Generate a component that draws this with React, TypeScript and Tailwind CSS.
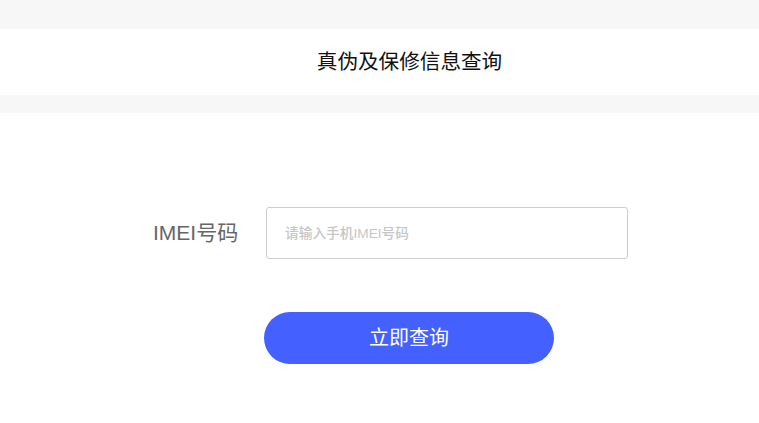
export default function App() {
  return (
    <div className="min-h-[423px] w-full bg-white" style={{ fontFamily: '"Liberation Sans", "Noto Sans CJK SC", sans-serif' }}>
      <div className="h-[29px] bg-[#f7f7f7]" />
      <div className="flex h-[66px] items-center justify-center pl-[60px] text-[20.6px] text-[#111]">
        真伪及保修信息查询
      </div>
      <div className="h-[18px] bg-[#f7f7f7]" />
      <div className="flex flex-col items-start pt-[94px] pl-[153px]">
        <div className="flex items-center">
          <div className="w-[113px] text-[21px] text-[#666]">IMEI号码</div>
          <input
            className="h-[52px] w-[362px] rounded-[3px] border border-[#cccccc] px-[18px] text-[13.7px] font-medium text-[#333] outline-none placeholder:text-[#c6c6c6]"
            placeholder="请输入手机IMEI号码"
          />
        </div>
        <button className="mt-[53px] ml-[111px] flex h-[52px] w-[290px] items-center justify-center rounded-full bg-[#4460ff] text-[20px] text-white">
          立即查询
        </button>
      </div>
    </div>
  );
}
